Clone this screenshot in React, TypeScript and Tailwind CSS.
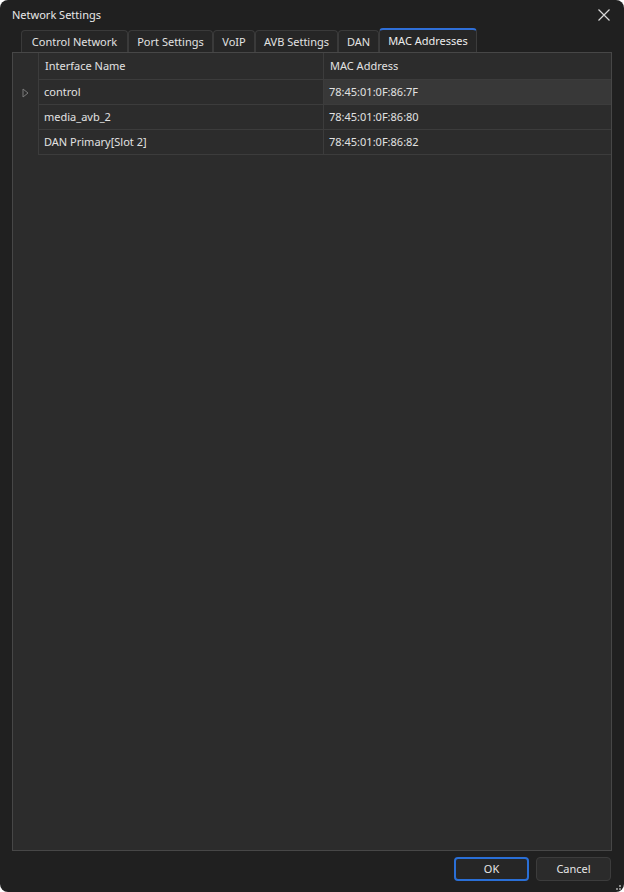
import React from "react";

const font = { fontFamily: '"Noto Sans", "Open Sans", "Liberation Sans", sans-serif' };

const tabs = [
  { t: "Control Network", w: "w-[107px]" },
  { t: "Port Settings", w: "w-[85px]" },
  { t: "VoIP", w: "w-[42px]" },
  { t: "AVB Settings", w: "w-[83px]" },
  { t: "DAN", w: "w-[41px]" },
  { t: "MAC Addresses", w: "w-[98px]" },
];
const rows = [
  { name: "control", mac: "78:45:01:0F:86:7F", sel: true },
  { name: "media_avb_2", mac: "78:45:01:0F:86:80", sel: false },
  { name: "DAN Primary[Slot 2]", mac: "78:45:01:0F:86:82", sel: false },
];

export default function App() {
  return (
    <div className="w-[624px] h-[892px] bg-white" style={font}>
      <div className="w-full h-full rounded-[8px] bg-[#202020] flex flex-col text-[11px] text-[#e2e2e2]">
        {/* title bar */}
        <div className="h-[28px] flex items-center justify-between pl-[12px] pr-[14px]">
          <span className="text-[11px] text-[#e8e8e8] leading-none pt-[1px]">Network Settings</span>
          <svg width="12" height="12" viewBox="0 0 12 12" className="text-[#d8d8d8] mt-[1px]">
            <path d="M0.5 0.5 L11.5 11.5 M11.5 0.5 L0.5 11.5" stroke="currentColor" strokeWidth="1.2" />
          </svg>
        </div>
        {/* tabs */}
        <div className="flex items-end pl-[21px] h-[24px]">
          {tabs.map((tb, i) => {
            const active = i === tabs.length - 1;
            return (
              <div
                key={tb.t}
                className={
                  (active
                    ? "h-[24px] flex items-center justify-center rounded-t-[4px] border border-b-0 border-[#3c3c3c] border-t-2 border-t-[#2f6fd8] bg-[#262626] text-[#ececec] "
                    : "h-[22px] flex items-center justify-center rounded-t-[4px] border border-b-0 border-[#3a3a3a] bg-[#262626] text-[#e2e2e2] ") +
                  tb.w
                }
              >
                <span className={"leading-none " + (active ? "pb-[2px]" : "pb-[1px]")}>{tb.t}</span>
              </div>
            );
          })}
        </div>
        {/* panel */}
        <div className="mx-[12px] flex-1 border border-[#474747] bg-[#2c2c2c]">
          <div className="flex flex-col">
            {/* header */}
            <div className="flex h-[27px]">
              <div className="w-[26px] border-r border-[#3c3c3c]" />
              <div className="w-[285px] flex items-center pl-[6px] pt-[1px] border-r border-b border-[#3c3c3c]">Interface Name</div>
              <div className="flex-1 flex items-center pl-[6px] pt-[1px] border-b border-[#3c3c3c]">MAC Address</div>
            </div>
            {rows.map((r) => (
              <div key={r.name} className="flex h-[25px]">
                <div className="w-[26px] border-r border-[#3c3c3c] flex items-center justify-center">
                  {r.sel && (
                    <svg width="7" height="10" viewBox="0 0 7 10">
                      <path d="M1 1 L6 5 L1 9 Z" fill="none" stroke="#7a7a7a" strokeWidth="1" />
                    </svg>
                  )}
                </div>
                <div className="w-[285px] flex items-center pl-[5px] pt-[1px] border-r border-b border-[#3c3c3c]">{r.name}</div>
                <div className={"flex-1 flex items-center pl-[5px] pt-[1px] border-b border-[#3c3c3c] " + (r.sel ? "bg-[#383838]" : "")}>{r.mac}</div>
              </div>
            ))}
          </div>
        </div>
        {/* buttons */}
        <div className="h-[41px] flex items-start justify-end pr-[13px] pt-[6px] gap-[7px] relative">
          <button className="w-[75px] h-[24px] rounded-[4px] border-2 border-[#2a6fd6] bg-[#262626] text-[#e6e6e6] text-[11px] pt-[1px]">OK</button>
          <button className="w-[75px] h-[24px] rounded-[4px] border border-[#3c3c3c] bg-[#2b2b2b] text-[#e6e6e6] text-[11px] pt-[1px]">Cancel</button>
          <div className="absolute right-[3px] bottom-[2px] grid grid-cols-2 gap-[1px]">
            <div className="w-[2px] h-[2px]" />
            <div className="w-[2px] h-[2px] bg-[#8a8a8a]" />
            <div className="w-[2px] h-[2px] bg-[#8a8a8a]" />
            <div className="w-[2px] h-[2px] bg-[#8a8a8a]" />
          </div>
        </div>
      </div>
    </div>
  );
}
